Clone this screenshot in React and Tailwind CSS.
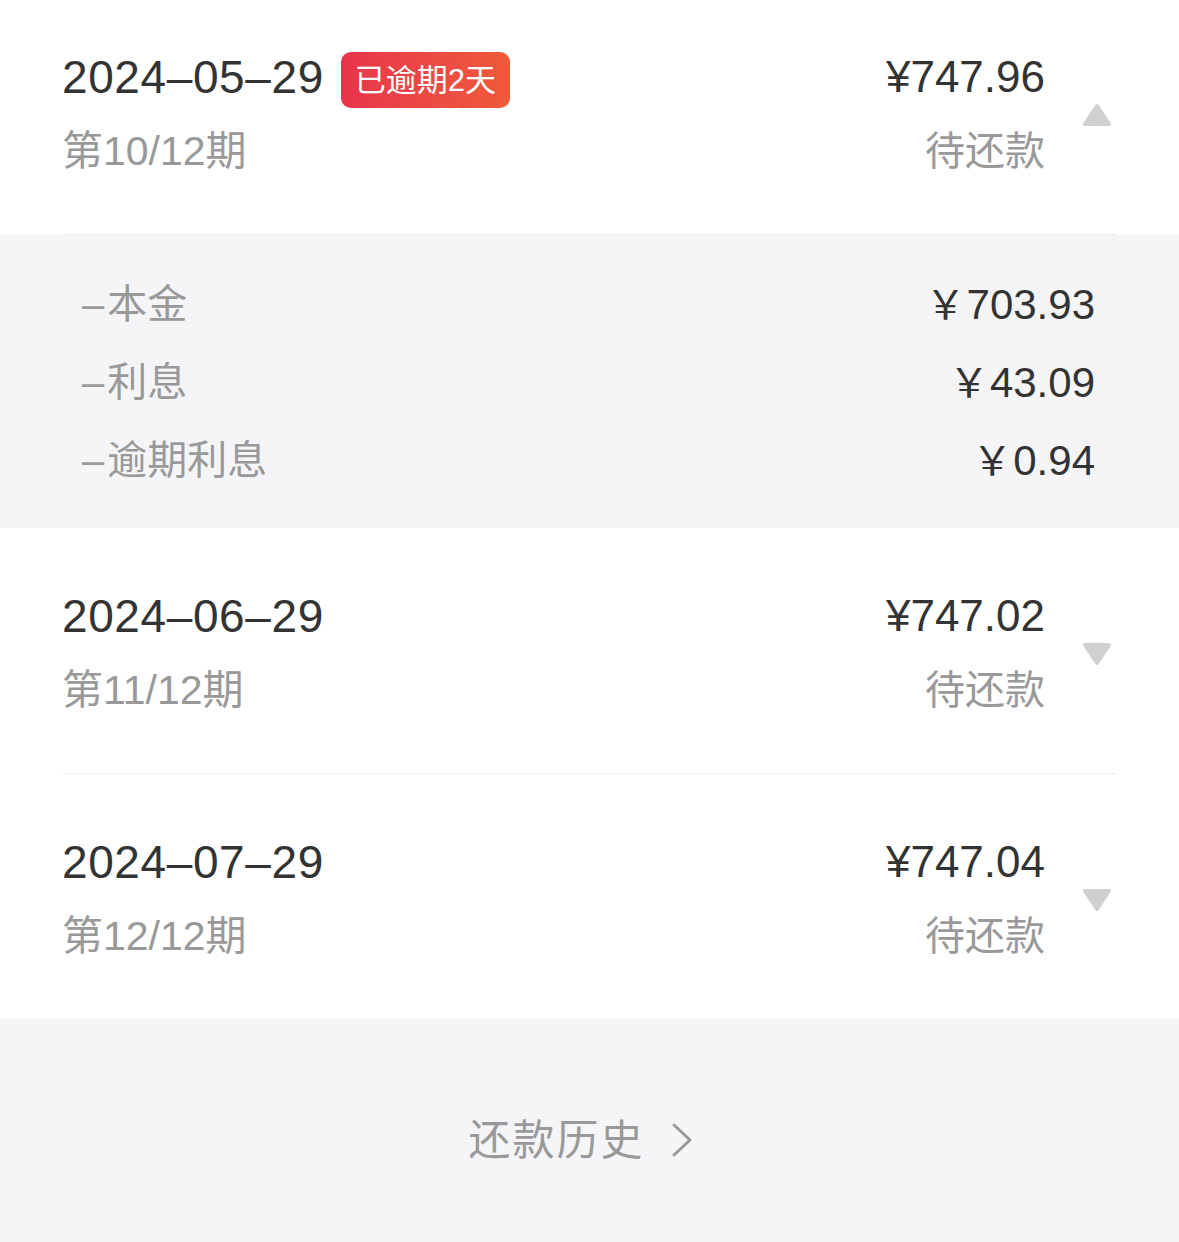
import React from "react";

function Tri({ up }) {
  return (
    <svg width="30" height="24" viewBox="0 0 30 24" className="block">
      <polygon
        points={up ? "15,3 27,21 3,21" : "3,3 27,3 15,21"}
        fill="#d0d0d0"
        stroke="#d0d0d0"
        strokeWidth="4"
        strokeLinejoin="round"
      />
    </svg>
  );
}

function Row({ date, period, amount, badge, up, topPad, divider }) {
  return (
    <div className="bg-white px-[62px]">
      <div
        className={`flex items-center ${divider ? "border-b border-[#ededed]" : ""} ${topPad}`}
      >
        <div className="flex-1 flex flex-col gap-[24px]">
          <div className="flex items-center h-[50px]">
            <span className="text-[46px] leading-[50px] tracking-[0.6px] text-[#333333]">{date}</span>
            {badge && (
              <span className="ml-[17px] h-[56px] px-[14px] flex items-center rounded-[10px] bg-gradient-to-r from-[#e8344b] to-[#ef5a3a] text-white text-[31px] leading-none mt-[6px]">
                {badge}
              </span>
            )}
          </div>
          <div className="text-[41px] leading-[50px] text-[#999999]">{period}</div>
        </div>
        <div className="flex flex-col items-end gap-[24px]">
          <div className="text-[44px] leading-[50px] text-[#333333]">{amount}</div>
          <div className="text-[40px] leading-[50px] text-[#999999]">待还款</div>
        </div>
        <div className="w-[72px] flex justify-end pr-[5px] pt-[2px]">
          <Tri up={up} />
        </div>
      </div>
    </div>
  );
}

export default function App() {
  return (
    <div className="w-[1179px] h-[1242px] bg-[#f5f5f7] font-['Liberation_Sans','Noto_Sans_CJK_SC',sans-serif] overflow-hidden">
      <Row
        date="2024–05–29"
        period="第10/12期"
        amount="¥747.96"
        badge="已逾期2天"
        up
        topPad="pt-[52px] pb-[58px]"
        divider
      />
      <div className="bg-[#f5f5f7] pl-[82px] pr-[84px] pt-[30px] pb-[29px]">
        {[
          ["本金", "703.93"],
          ["利息", "43.09"],
          ["逾期利息", "0.94"],
        ].map(([k, v]) => (
          <div key={k} className="flex justify-between items-center h-[78px]">
            <span className="text-[40px] text-[#999999]">
              <span className="mr-[3px]">–</span>
              {k}
            </span>
            <span className="text-[42px] text-[#333333]">
              <span className="text-[40px] mr-[1px]">￥</span>
              {v}
            </span>
          </div>
        ))}
      </div>
      <Row
        date="2024–06–29"
        period="第11/12期"
        amount="¥747.02"
        topPad="pt-[63px] pb-[58px]"
        divider
      />
      <Row
        date="2024–07–29"
        period="第12/12期"
        amount="¥747.04"
        topPad="pt-[63px] pb-[58px]"
      />
      <div className="h-[225px] flex items-center justify-center pt-[17px] pr-[18px]">
        <span className="text-[42px] text-[#999999] tracking-[2px]">还款历史</span>
        <svg width="22" height="36" viewBox="0 0 22 36" className="ml-[26px]">
          <polyline
            points="3,3 19,18 3,33"
            fill="none"
            stroke="#999999"
            strokeWidth="3"
            strokeLinecap="round"
            strokeLinejoin="round"
          />
        </svg>
      </div>
    </div>
  );
}
